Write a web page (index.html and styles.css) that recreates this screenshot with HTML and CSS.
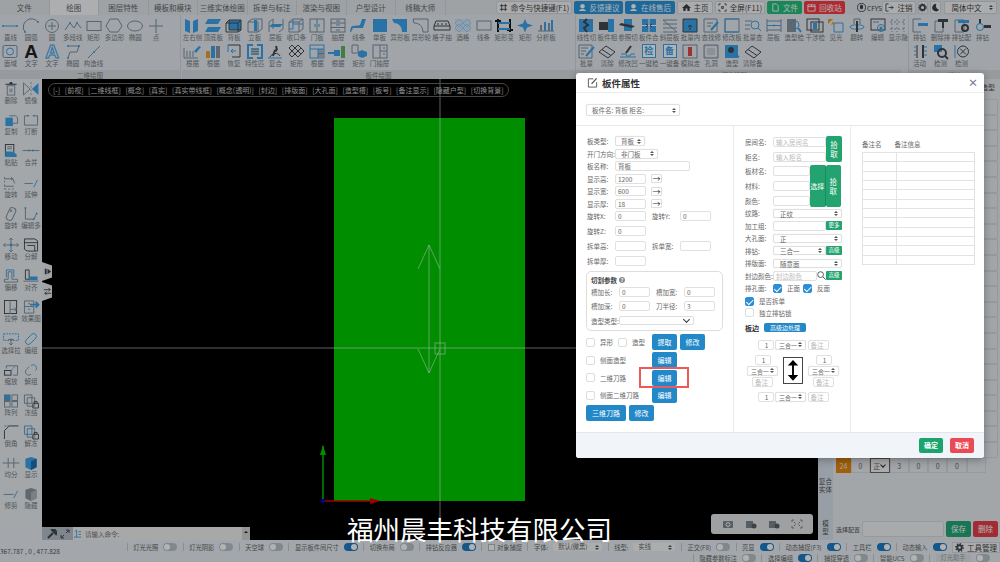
FILE: index.html
```html
<!DOCTYPE html>
<html lang="zh-CN">
<head>
  <meta charset="utf-8">
  <title>板件属性</title>
  <link rel="stylesheet" href="styles.css">
</head>
<body>
<div class="app">

  <!-- top tabs -->
  <div class="topbar">
    <div class="tabs">
      <div class="tab">文件</div>
      <div class="tab active">绘图</div>
      <div class="tab">图层特性</div>
      <div class="tab">模板和模块</div>
      <div class="tab">三维实体绘图</div>
      <div class="tab">拆单与标注</div>
      <div class="tab">渲染与视图</div>
      <div class="tab">户型设计</div>
      <div class="tab">线稿大师</div>
    </div>
    <div class="top-actions">
      <div class="tb w76"><svg class="ti" viewBox="0 0 10 10"><path class="k" d="M3 1v8M7 1v8M1 3h8M1 7h8"/></svg>命令与快捷键(F1)</div>
      <div class="tb blue w49"><svg class="ti" viewBox="0 0 10 10"><circle class="fw" cx="5" cy="3.5" r="2.5"/><path class="fw" d="M1 9c1-3 7-3 8 0z"/></svg>反馈建议</div>
      <div class="tb blue w50"><svg class="ti" viewBox="0 0 10 10"><circle class="fw" cx="5" cy="3.5" r="2.5"/><path class="fw" d="M1 9c1-3 7-3 8 0z"/></svg>在线售后</div>
      <div class="tb w36"><svg class="ti" viewBox="0 0 10 10"><path class="fk" d="M5 1 0 5.5h1.5V9h2.500V6h2v3h2.500V5.500H10z"/></svg>主页</div>
      <div class="tb w50"><svg class="ti" viewBox="0 0 10 10"><path class="k" d="M1 3V1h2M7 1h2v2M9 7v2H7M3 9H1V7M4 4h2v2H4z"/></svg>全屏(F11)</div>
      <div class="tb green w35"><svg class="ti" viewBox="0 0 10 10"><path class="w" d="M2 1h4l2 2v6H2z"/></svg>文件</div>
      <div class="tb red w41"><svg class="ti" viewBox="0 0 10 10"><path class="w" d="M1 2h8v7H1zM1 4h8M5 2v2"/></svg>回收站</div>
      <div class="user"><svg class="ti" viewBox="0 0 10 10"><circle class="k" cx="5" cy="5" r="4.500"/><ellipse class="fk" cx="5" cy="4.500" rx="1.800" ry="2.500"/></svg>CFYS</div>
      <div class="tb w34"><svg class="ti" viewBox="0 0 10 10"><path class="k" d="M4 1H1v8h3M4 5h5M7 3l2 2-2 2"/></svg>注销</div>
      <div class="tb w10 icon-only"><svg class="ti" viewBox="0 0 10 10"><circle class="k2" cx="5" cy="5" r="2.800"/><circle class="k" cx="5" cy="5" r="4.200" stroke-dasharray="1.500 1.500"/></svg></div>
      <div class="tb w11 icon-only"><svg class="ti" viewBox="0 0 10 10"><path class="fk" d="M6 1a4.200 4.200 0 1 0 3 6.500A4.500 4.500 0 0 1 6 1z"/></svg></div>
      <div class="tb lang sel">简体中文</div>
    </div>
  </div>

  <!-- ribbon -->
  <div class="ribbon">
    <div class="group g1">
      <div class="tools">
        <div class="tool"><svg viewBox="0 0 20 15"><path class="b" d="M3 8h14"/><circle class="fb" cx="3" cy="8" r="1"/><circle class="fb" cx="17" cy="8" r="1"/></svg><span>直线</span></div>
        <div class="tool"><svg viewBox="0 0 20 15"><path class="l" d="M4 14A8 8 0 0 1 17 4"/><circle class="fb" cx="4" cy="14" r="1"/><circle class="fb" cx="17" cy="4" r="1"/></svg><span>圆弧</span></div>
        <div class="tool"><svg viewBox="0 0 20 15"><circle class="l" cx="10" cy="8" r="6.500"/><path class="l" d="M10 4v8M6 8h8"/></svg><span>圆</span></div>
        <div class="tool"><svg viewBox="0 0 20 15"><path class="l" d="M2 12 7 5l4 5 3-5 4 5"/><circle class="fb" cx="7" cy="5" r="1"/><circle class="fb" cx="14" cy="5" r="1"/></svg><span>多段线</span></div>
        <div class="tool"><svg viewBox="0 0 20 15"><rect class="l" x="3" y="3.500" width="14" height="9"/></svg><span>矩形</span></div>
        <div class="tool"><svg viewBox="0 0 20 15"><path class="l" d="M6 1h8l4 7-4 6H6L2 8z"/></svg><span>多边形</span></div>
        <div class="tool"><svg viewBox="0 0 20 15"><ellipse class="l" cx="10" cy="8" rx="7.500" ry="5"/></svg><span>椭圆</span></div>
        <div class="tool"><svg viewBox="0 0 20 15"><path class="l" d="M10 1v14M3 8h14"/></svg><span>点</span></div>
        <div class="tool"><svg viewBox="0 0 20 15"><rect class="l" x="3" y="1.500" width="14" height="12" rx="1.500"/><circle class="b" cx="10" cy="7.500" r="3.500"/></svg><span>面域</span></div>
        <div class="tool"><svg viewBox="0 0 20 15"><text class="glyph" x="10" y="14">A</text></svg><span>文字</span></div>
        <div class="tool"><svg viewBox="0 0 20 15"><text class="glyph outline" x="10" y="14">A</text></svg><span>文字</span></div>
        <div class="tool"><svg viewBox="0 0 20 15"><path class="l" d="M5 2h11l-2 6H7L5 14"/><circle class="fb" cx="5" cy="2" r="1"/><circle class="fb" cx="16" cy="2" r="1"/><circle class="fb" cx="5" cy="14" r="1"/></svg><span>椭圆</span></div>
        <div class="tool"><svg viewBox="0 0 20 15"><path class="l" d="m4 14 12-12"/><circle class="fb" cx="10" cy="8" r="1"/></svg><span>构造线</span></div>
      </div>
      <div class="group-name">二维绘图</div>
    </div>

    <div class="group g2">
      <div class="tools">
        <div class="tool"><svg viewBox="0 0 20 15"><path class="fb" d="M3 1l5 2v12l-5-2zM11 3l5-2v12l-5 2z"/></svg><span>左右侧</span></div>
        <div class="tool"><svg viewBox="0 0 20 15"><path class="fb" d="M5 1h13l-3 5H2zM5 9h13l-3 5H2z"/></svg><span>顶底板</span></div>
        <div class="tool"><svg viewBox="0 0 20 15"><path class="fb" d="M5 2h12v10H5z"/><path class="k" d="M5 2h12v10H5zM2 5h12v9H2zM2 5l3-3M14 5l3-3M14 14l3-2"/></svg><span>背板</span></div>
        <div class="tool"><svg viewBox="0 0 20 15"><path class="l" d="M3 4h10v10H3zM3 4l4-3h10v10l-4 3"/><path class="fb" d="M9 2h3v11H9z"/></svg><span>立板</span></div>
        <div class="tool"><svg viewBox="0 0 20 15"><path class="l" d="M3 4v10M17 1v10M3 4l4-3M13 14l4-3M7 1v10"/><path class="fb" d="M6 6h11l-3 3H3z"/></svg><span>层板</span></div>
        <div class="tool"><svg viewBox="0 0 20 15"><path class="l" d="M3 4h10v10H3zM3 4l4-3h10v10l-4 3M13 4l4-3"/><path class="b" d="M7 1v10H3M17 6H7"/></svg><span>收口条</span></div>
        <div class="tool"><svg viewBox="0 0 20 15"><rect class="l" x="3" y="1" width="14" height="13"/><path class="l" d="M10 1v13"/><path class="b" d="M8 6v3M12 6v3"/></svg><span>门板</span></div>
        <div class="tool"><svg viewBox="0 0 20 15"><rect class="l" x="3" y="1" width="14" height="13"/><path class="l" d="M3 5h14M3 9.500h14M8 3h4M8 7h4M8 12h4"/></svg><span>抽屉</span></div>
        <div class="tool"><svg viewBox="0 0 20 15"><path class="fb" d="M13 1h4l-3 9H4L2 14H1l1-5c2-2 7-1 9-2z"/></svg><span>线条</span></div>
        <div class="tool"><svg viewBox="0 0 20 15"><rect class="fb" x="3" y="1" width="14" height="13"/></svg><span>单板</span></div>
        <div class="tool"><svg viewBox="0 0 20 15"><path class="fb" d="M2 1h15v13h-5C12 8 8 5 4 5z"/></svg><span>异形板</span></div>
        <div class="tool"><svg viewBox="0 0 20 15"><path class="l" d="M2 1h15v13h-5C12 8 8 5 3 5z"/></svg><span>异形轮</span></div>
        <div class="tool"><svg viewBox="0 0 20 15"><path class="k" d="M2 8 4 3h12l2 5v4H2zM2 8h16"/><path class="k" d="M6 5v2M10 5v2M14 5v2"/></svg><span>格子抽</span></div>
        <div class="tool"><svg viewBox="0 0 20 15"><rect class="flb" x="2" y="1" width="16" height="13"/><path class="bt" d="M2 5 6 1l4 4 4-4 4 4M2 10l4-4 4 4 4-4 4 4M2 5l4 4 4-4 4 4 4-4M2 10l4 4 4-4 4 4 4-4"/></svg><span>酒格</span></div>
        <div class="tool"><svg viewBox="0 0 20 15"><rect class="l" x="3" y="3" width="14" height="9"/></svg><span>线条</span></div>
        <div class="tool"><svg viewBox="0 0 20 15"><path class="kb" d="M4 1v13M16 1v13M1 3h6M13 12h6"/><path class="b2" d="M4 5h12M4 11h12"/></svg><span>矩形变</span></div>
        <div class="tool"><svg viewBox="0 0 20 15"><path class="fb" d="M10 1l2 4.500 6 2-6 2-2 5-2-5-6-2 6-2z"/></svg><span>矩形</span></div>
        <div class="tool"><svg viewBox="0 0 20 15"><path class="l" d="M2 13h16"/><path class="fg" d="M4 7h2v6H4zM12 5h2v8h-2z"/><path class="fb" d="M8 4h2v9H8zM15 2h2v11h-2z"/></svg><span>分析板</span></div>
        <div class="tool"><svg viewBox="0 0 20 15"><path class="l" d="M2 4v10h14"/><path class="l" d="M5 7v6M8 7v6M11 7v6"/><path class="fb" d="m12 7 5-5 2 1-5 6z"/></svg><span>根据</span></div>
        <div class="tool"><svg viewBox="0 0 20 15"><path class="for" d="M3 7h4v7H3z"/><path class="fy" d="M8 2h4v12H8z"/><path class="fg" d="M13 2h4v12h-4z"/></svg><span>根据</span></div>
        <div class="tool"><svg viewBox="0 0 20 15"><path class="k" d="M4 1h12v12H8"/><path class="b" d="M12 7H7M9 5 7 7l2 2M4 1v7"/></svg><span>恢复</span></div>
        <div class="tool"><svg viewBox="0 0 20 15"><path class="b2" d="M8 1H3v13h5M12 1h5v13h-5M6 7.500h8"/><path class="k" d="M6 5h8M6 10h8"/></svg><span>特性匹</span></div>
        <div class="tool"><svg viewBox="0 0 20 15"><path class="k2" d="m7 12 2-6M9 6l2 1M10 2l1 4"/><path class="k" d="M4 13c2-4 8-5 10-1"/><path class="b" d="M2 14h14"/></svg><span>复合</span></div>
        <div class="tool"><svg viewBox="0 0 20 15"><path class="k" d="m3 4 3-3 3 3-3 3zM9 4l3-3 3 3-3 3zM15 4l3 3-3 3-3-3zM6 7l3 3-3 3-3-3zM9 10l3-3 3 3-3 3z"/></svg><span>矩形</span></div>
        <div class="tool"><svg viewBox="0 0 20 15"><rect class="b" x="3" y="1" width="14" height="13"/><path class="fg2" d="M11 5h6v9h-6z"/><path class="b" d="M3 5h14M11 5v9M11 9.500h6"/></svg><span>根据</span></div>
        <div class="tool"><svg viewBox="0 0 20 15"><path class="b2" d="M0 9h8"/><path class="fb" d="M6 6h6v6H6z"/><path class="fgr" d="M13 2h4v12h-4z"/></svg><span>根据</span></div>
        <div class="tool"><svg viewBox="0 0 20 15"><path class="l" d="M3 1h6v7h3"/><path class="l" d="M3 1v8h6"/><path class="fb" d="m13 6 5 2v4l-5 2-4-2V8z"/></svg><span>矩形</span></div>
        <div class="tool"><svg viewBox="0 0 20 15"><rect class="l" x="3" y="1" width="14" height="13"/><path class="l" d="M10 1v13M10 7h7M13 4h2M13 10h2"/></svg><span>门抽屉</span></div>
      </div>
      <div class="group-name">板件绘图</div>
    </div>

    <div class="group g3">
      <div class="tools">
        <div class="tool"><svg viewBox="0 0 20 15"><rect class="fb" x="3" y="1" width="14" height="13"/><path class="k2" d="M11 1 8 4l4 3-4 3 3 4"/></svg><span>线性切</span></div>
        <div class="tool"><svg viewBox="0 0 20 15"><path class="fdk" d="M2 4h11v8H2z"/><path class="fb" d="M11 1h6v13h-6z"/></svg><span>板件相</span></div>
        <div class="tool"><svg viewBox="0 0 20 15"><path class="fb" d="M6 1h8v12H6z"/><path class="fdk" d="M3 5l14 3-3 2L1 7z"/></svg><span>参照切</span></div>
        <div class="tool"><svg viewBox="0 0 20 15"><rect class="fb" x="3" y="1" width="14" height="13"/><path class="wl" d="M3 7.500h14M10 1v13"/><path class="k" d="M7 6l2 1.500L7 9M13 6l-2 1.500 2 1.500"/></svg><span>板件合</span></div>
        <div class="tool"><svg viewBox="0 0 20 15"><path class="l" d="M3 2h14M3 6h14M3 10h14M3 14h14M3 2l14 12"/></svg><span>斜层板</span></div>
        <div class="tool"><svg viewBox="0 0 20 15"><rect class="fb" x="3" y="1" width="14" height="13"/><path class="k" d="M3 1h14v13H3zM10 12V7M8 9l2-2 2 2"/></svg><span>批量内</span></div>
        <div class="tool"><svg viewBox="0 0 20 15"><path class="l" d="M3 1h13v13H3zM6 5h6M6 8h4"/><path class="b2" d="m10 12 7-8"/></svg><span>查找修</span></div>
        <div class="tool"><svg viewBox="0 0 20 15"><rect class="l" x="3" y="1" width="14" height="13"/><path class="b" d="M3 1h14M3 14h14M3 1v13"/></svg><span>修改板</span></div>
        <div class="tool"><svg viewBox="0 0 20 15"><path class="l" d="M2 3h7M2 7h5M2 11h5"/><circle class="b" cx="12" cy="7" r="4"/><path class="b" d="m15 10 3 3"/></svg><span>批量查</span></div>
        <div class="tool"><svg viewBox="0 0 20 15"><path class="l" d="M3 1v13M17 1v13M3 3h14M3 12h14"/><path class="b" d="M3 7.500h14"/><circle class="fb" cx="10" cy="7.500" r="1"/></svg><span>层板</span></div>
        <div class="tool"><svg viewBox="0 0 20 15"><path class="fg" d="M3 1h9v13H3z"/><circle class="b" cx="11" cy="7" r="4"/><path class="b2" d="m14 10 3 4"/></svg><span>造型检</span></div>
        <div class="tool"><svg viewBox="0 0 20 15"><rect class="k" x="2" y="1" width="12" height="11"/><rect class="k" x="6" y="4" width="12" height="10"/><rect class="fb" x="8" y="5" width="4" height="6"/></svg><span>干涉检</span></div>
        <div class="tool"><svg viewBox="0 0 20 15"><path class="b" d="M8 5h9v9H8z"/><path class="for" d="M2 1h5L2 6z"/><path class="for" d="m7 3 1 3-3 1z"/></svg><span>见光</span></div>
        <div class="tool"><svg viewBox="0 0 20 15"><path class="l" d="M7 1h6M7 1v5M13 1v5"/><path class="b" d="M3 9c0-3 14-3 14 0s-14 3-14 0"/><path class="k2" d="M10 3v11"/></svg><span>翻转</span></div>
        <div class="tool"><svg viewBox="0 0 20 15"><rect class="k" x="3" y="1" width="14" height="11"/><path class="l" d="M5 4h6"/><circle class="b" cx="13" cy="10" r="3.500"/><circle class="fb" cx="13" cy="10" r="1.500"/></svg><span>编辑</span></div>
        <div class="tool"><svg viewBox="0 0 20 15"><path class="dash" d="M4 1v13M9 1v13M16 1v13M2 4h16M2 11h16"/></svg><span>显示隐</span></div>
        <div class="tool"><svg viewBox="0 0 20 15"><path class="l" d="M3 1h13v13H3z"/><path class="l" d="M5 4h7M5 7h5M5 10h3"/><path class="b2" d="m10 12 8-9"/></svg><span>批量</span></div>
        <div class="tool"><svg viewBox="0 0 20 15"><path class="k" d="m2 8 7-6 9 6-7 6zM5 5.500l9 6"/></svg><span>清除</span></div>
        <div class="tool"><svg viewBox="0 0 20 15"><path class="b" d="M2 13h16M3 10h5l1 2h3l1-2h4"/><path class="k2" d="m8 9 5-7"/></svg><span>修改凹</span></div>
        <div class="tool"><div class="check-tile">检</div><span>一键检</span></div>
        <div class="tool"><div class="check-tile">备</div><span>一键备</span></div>
        <div class="tool"><svg viewBox="0 0 20 15"><rect class="l" x="3" y="1" width="14" height="13"/><path class="fr" d="M8 3h4v9H8z"/></svg><span>模拟走</span></div>
        <div class="tool"><svg viewBox="0 0 20 15"><rect class="fg3" x="3" y="1" width="14" height="13"/><path class="l" d="M3 1h14v13H3z"/><path class="w" d="M5 3h10v9H5z"/></svg><span>孔洞</span></div>
        <div class="tool"><svg viewBox="0 0 20 15"><path class="fb" d="M3 1h13v13H3z"/><circle class="fdk" cx="9" cy="6" r="3"/><path class="b2" d="m11 9 6 4"/></svg><span>造型</span></div>
        <div class="tool"><svg viewBox="0 0 20 15"><path class="k" d="m2 8 7-6 9 6-7 6zM5 5.500l9 6"/></svg><span>清除备</span></div>
      </div>
      <div class="group-name">板件清除</div>
    </div>

    <div class="group g4">
      <div class="tools">
        <div class="tool"><svg viewBox="0 0 20 15"><path class="l" d="M3 1h8M3 1v13h8"/><path class="fb" d="M8 5h10v3H8z"/></svg><span>排钻</span></div>
        <div class="tool"><svg viewBox="0 0 20 15"><path class="l" d="M4 3h8v11H4z"/><path class="fdk" d="M7 1h10v3H7z"/><path class="k2" d="M12 4v6"/></svg><span>删除排</span></div>
        <div class="tool"><svg viewBox="0 0 20 15"><path class="l" d="M3 2h9v12H3z"/><path class="fb" d="M6 2h11v3H6z"/><circle class="k2" cx="13" cy="10" r="3"/></svg><span>排钻配</span></div>
        <div class="tool"><svg viewBox="0 0 20 15"><path class="fdk" d="M6 1h2v5H6zM11 7h7v3h-7z"/><circle class="b" cx="7" cy="9" r="3.500"/></svg><span>排钻</span></div>
        <div class="tool"><svg viewBox="0 0 20 15"><path class="fg" d="M6 1h2v13H6z"/><path class="fdk" d="M12 1h2v13h-2z"/><path class="b" d="M4 3h2M4 7h2M4 11h2M14 3h3M14 7h3M14 11h3"/></svg><span>活动</span></div>
        <div class="tool"><svg viewBox="0 0 20 15"><path class="fb" d="M3 1h8v7H3z"/><circle class="k2" cx="11" cy="9" r="4"/><path class="k2" d="m14 12 3 3"/></svg><span>检测</span></div>
        <div class="tool"><svg viewBox="0 0 20 15"><path class="b" d="M3 1v13"/><circle class="k" cx="11" cy="7.500" r="5.500"/><path class="k" d="m8 4.500 6 6M14 4.500l-6 6"/></svg><span>检测</span></div>
      </div>
      <div class="group-name">排钻</div>
    </div>
  </div>

  <!-- main row: left tools, canvas, right panel -->
  <div class="main">
    <div class="sidebar">
      <div class="tool"><svg viewBox="0 0 20 15"><path class="fdk" d="M9 0h2l1 2h4v1H4V2h4z"/><rect class="l" x="6" y="4" width="8" height="10"/><path class="l" d="M9 7v4M11 7v4"/></svg><span>删除</span></div>
      <div class="tool"><svg viewBox="0 0 20 15"><path class="fb" d="M18 1 11 7.500l7 6.500z"/><path class="l" d="M2 1l7 6.500L2 14z"/><path class="dash" d="M10 0v15"/></svg><span>镜像</span></div>
      <div class="tool"><svg viewBox="0 0 20 15"><path class="l" d="M8 3h7l2 2v6H8"/><path class="fb" d="M4 5h8v9H4z"/></svg><span>复制</span></div>
      <div class="tool"><svg viewBox="0 0 20 15"><path class="l" d="M8 3H3v10h14V3h-5"/><path class="b" d="M6 3h2M12 3h2"/></svg><span>打断</span></div>
      <div class="tool"><svg viewBox="0 0 20 15"><rect class="k" x="4" y="0.500" width="9" height="12"/><path class="l" d="M6 3h5M6 5h5"/><path class="fb" d="M4 14V8h7l5 3v3z"/></svg><span>粘贴</span></div>
      <div class="tool"><svg viewBox="0 0 20 15"><path class="l" d="M1 7h18"/><circle class="fb" cx="8" cy="7" r="1"/><circle class="fb" cx="12" cy="7" r="1"/></svg><span>合并</span></div>
      <div class="tool"><svg viewBox="0 0 20 15"><path class="dash" d="M3 1v13M3 14h12"/><path class="l" d="M3 3h9l2 5M10 4l2-1-2-2M3 11h10"/></svg><span>旋转</span></div>
      <div class="tool"><svg viewBox="0 0 20 15"><path class="l" d="M3 8h7"/><path class="dash" d="M10 8h4"/><path class="b" d="m13 12 4-8"/></svg><span>延伸</span></div>
      <div class="tool"><svg viewBox="0 0 20 15"><rect class="l" x="6.500" y="0.500" width="7" height="14" rx="3" transform="rotate(25 10 7.500)"/><circle class="l" cx="10" cy="4" r="1"/></svg><span>旋转</span></div>
      <div class="tool"><svg viewBox="0 0 20 15"><path class="l" d="M4 1v12h9l3-6"/><circle class="fb" cx="4" cy="1" r="1"/><circle class="fb" cx="13" cy="13" r="1"/><circle class="fb" cx="16" cy="7" r="1"/></svg><span>编辑多</span></div>
      <div class="tool"><svg viewBox="0 0 20 15"><path class="l" d="M10 0v15M2 7.500h16M8 2l2-2 2 2M8 13l2 2 2-2M4 5.500l-2 2 2 2M16 5.500l2 2-2 2"/><circle class="fb" cx="10" cy="7.500" r="1.500"/></svg><span>移动</span></div>
      <div class="tool"><svg viewBox="0 0 20 15"><path class="k" d="M3 1h11l3 2v11H6l-3-2zM3 5h14M6 8h8v6"/></svg><span>分解</span></div>
      <div class="tool"><svg viewBox="0 0 20 15"><path class="l" d="M3 11h4V3h4v8h6v3H3z"/><path class="b" d="M5 9h0V1h8v8"/></svg><span>偏移</span></div>
      <div class="tool"><svg viewBox="0 0 20 15"><path class="k" d="M4 1h4v10H4z"/><path class="fb" d="M8 8h9v4H8z"/><path class="l" d="M2 13h16"/></svg><span>对齐</span></div>
      <div class="tool"><svg viewBox="0 0 20 15"><rect class="k" x="3" y="0.500" width="13" height="14"/><path class="l" d="M9 0v15M9 10h7M14 8l2 2-2 2"/></svg><span>拉伸</span></div>
      <div class="tool"><svg viewBox="0 0 20 15"><path class="l" d="M3 1h10v13H3zM3 7h10M7 4h2M7 10h2"/><path class="b2" d="M9 5h9M15 2l3 3-3 3"/></svg><span>效果图</span></div>
      <div class="tool"><svg viewBox="0 0 20 15"><path class="dashb" d="M2 2h16v7H2z"/><path class="l" d="M10 14V7M8 12l2 2 2-2M7 8h6"/></svg><span>选择拉</span></div>
      <div class="tool"><svg viewBox="0 0 20 15"><rect class="b" x="3" y="4.500" width="14" height="6" rx="3" transform="rotate(-45 10 7.500)"/></svg><span>编组</span></div>
      <div class="tool"><svg viewBox="0 0 20 15"><rect class="k" x="3" y="8" width="7" height="5"/><path class="l" d="M5 6V3h12v10h-5"/><path class="dashb" d="M10 8l5-5"/></svg><span>缩放</span></div>
      <div class="tool"><svg viewBox="0 0 20 15"><path class="b" d="M10 3c3-3 8 1 5 5"/><path class="l" d="M10 12c-3 3-8-1-5-5l3-3"/></svg><span>解组</span></div>
      <div class="tool"><svg viewBox="0 0 20 15"><rect class="fb" x="3" y="1" width="6" height="6"/><rect class="l" x="3" y="1" width="6" height="6"/><rect class="l" x="11" y="1" width="6" height="6"/><rect class="l" x="3" y="8" width="6" height="6"/><rect class="l" x="11" y="8" width="6" height="6"/></svg><span>阵列</span></div>
      <div class="tool"><svg viewBox="0 0 20 15"><path class="l" d="M3 1h8v9H3zM6 4h8v9H6z"/><path class="k" d="M12 10h6v5h-6zM13.500 10V8h3v2"/></svg><span>冻结</span></div>
      <div class="tool"><svg viewBox="0 0 20 15"><path class="k" d="M3 15V6l5-5h10"/><path class="dashb" d="M3 1h5"/></svg><span>倒角</span></div>
      <div class="tool"><svg viewBox="0 0 20 15"><path class="b" d="M3 1h8v9H3z"/><path class="l" d="M6 4h8v9H6z"/><path class="k" d="M12 10h6v5h-6zM13.500 10V8h3v2"/></svg><span>解冻</span></div>
      <div class="tool"><svg viewBox="0 0 20 15"><path class="l" d="M1 7.500h18M7 2v11M13 2v11"/></svg><span>均分</span></div>
      <div class="tool"><svg viewBox="0 0 20 15"><path class="fb" d="M4 3l6-2 6 2v9l-6 3-6-3z"/><path class="fdb" d="M10 6l6-3v9l-6 3z"/></svg><span>显示</span></div>
      <div class="tool"><svg viewBox="0 0 20 15"><path class="l" d="M2 8h9"/><path class="dash" d="M11 8h3"/><path class="b" d="m13 12 4-8"/></svg><span>修剪</span></div>
      <div class="tool"><svg viewBox="0 0 20 15"><path class="fg" d="M4 3l6-2 6 2v9l-6 3-6-3z"/><path class="fg2" d="M10 6l6-3v9l-6 3z"/></svg><span>隐藏</span></div>
    </div>

    <div class="canvas">
      <div class="panel-green"></div>
      <svg class="overlay-lines" viewBox="0 0 776 461">
        <path class="cross" d="M398 0v438M0 269h776"/>
        <rect class="cross" x="393" y="264" width="10" height="11"/>
        <path class="cross" d="M376 190 387 166l11 24M376 270l11 24 11-24M387 166v128"/>
        <path class="ax-g" d="M281 422v-55"/>
        <path class="ax-gh" d="m278 376 3-10 3 10z"/>
        <path class="ax-r" d="M281 422h55"/>
        <path class="ax-rh" d="m328 419 10 3-10 3z"/>
        <circle class="ax-b" cx="281" cy="422" r="2"/>
      </svg>
      <div class="view-bar">
        <span>[-]</span><span>[前视]</span><span>[二维线框]</span><span>[概念]</span><span>[真实]</span><span>[真实带线框]</span><span>[概念(透明)]</span><span>[封边]</span><span>[排版面]</span><span>[大孔面]</span><span>[造型槽]</span><span>[板号]</span><span>[备注显示]</span><span>[隐藏户型]</span><span>[切换背景]</span>
      </div>
      <div class="side-tabs">
        <div class="side-tab"><svg viewBox="0 0 10 10"><path class="fk" d="M2 2h2v6H2zM5 2l4 3-4 3z"/></svg></div>
        <div class="side-tab"><svg viewBox="0 0 10 10"><path class="k" d="M1 3h7M6 1l2 2-2 2M9 7H2M4 5 2 7l2 2"/></svg></div>
      </div>
      <div class="cmd">
        <div class="cmd-tools">
          <svg viewBox="0 0 10 10"><path class="k2" d="m1 9 5-5M5 1a3 3 0 0 1 4 4z"/></svg>
          <svg viewBox="0 0 10 10"><path class="k" d="M1 9l3-3M6 4l3-3M1 6v3h3M6 1h3v3"/></svg>
        </div>
        <div class="cmd-input"><svg viewBox="0 0 10 10"><path class="b" d="M4 1v8M2 3l2-2M6 3h3M6 6h3M6 9h3M1 9h5"/></svg>请输入命令:</div>
        <div class="cmd-up"></div>
      </div>
      <div class="cam">
        <svg viewBox="0 0 12 10"><rect class="gf" x="1" y="2" width="10" height="7" rx="1"/><circle class="wl" cx="6" cy="5.500" r="2"/></svg>
        <svg viewBox="0 0 12 10"><path class="gf" d="M1 2h7v4h3v3H1z"/><circle class="gd" cx="9" cy="7" r="2.500"/></svg>
        <svg viewBox="0 0 12 10"><path class="gf" d="M1 2h7v4h3v3H1z"/><circle class="gd" cx="9" cy="7" r="2.500"/></svg>
        <svg viewBox="0 0 12 10"><path class="gl" d="M1 3V1h2M9 1h2v2M11 7v2H9M3 9H1V7M3 3l1.500 1.500M9 3 7.500 4.500M9 7 7.500 5.500M3 7l1.500-1.500"/></svg>
      </div>
    </div>

    <div class="right-panel">
      <div class="strip">
        <div class="strip-label">复合<br>实体</div>
        <div class="strip-label model">模 型</div>
      </div>
      <div class="right-body">
        <div class="rp-title">造型</div>
        <div class="rp-rows">
          <div class="rp-row"></div><div class="rp-row"></div><div class="rp-row"></div><div class="rp-row"></div>
          <div class="rp-row"></div><div class="rp-row"></div><div class="rp-row"></div><div class="rp-row"></div>
          <div class="rp-row"></div><div class="rp-row"></div><div class="rp-row"></div><div class="rp-row"></div>
          <div class="rp-row"></div><div class="rp-row"></div><div class="rp-row"></div><div class="rp-row"></div>
          <div class="rp-row"></div><div class="rp-row"></div><div class="rp-row"></div><div class="rp-row"></div>
          <div class="rp-row"></div><div class="rp-row"></div><div class="rp-row"></div>
          <div class="rp-row cells">
            <div class="cell orange">24</div><div class="cell">0</div><div class="cell zs">正</div><div class="cell">3</div><div class="cell">0</div><div class="cell">0</div><div class="cell">0</div><div class="cell"></div>
          </div>
        </div>
        <div class="config">
          <span>选择配置</span>
          <div class="config-sel"></div>
          <div class="cfg-btn save">保存</div>
          <div class="cfg-btn del">删除</div>
        </div>
      </div>
    </div>
  </div>

  <!-- status bar -->
  <div class="status">
    <div class="coords">367.787 , 0 , 477.828</div>
    <div class="status-rows">
      <div class="status-row">
        <div class="st">灯光光照<i class="tg"></i></div>
        <div class="st">灯光阴影<i class="tg"></i></div>
        <div class="st">天空球<i class="tg"></i></div>
        <div class="st">显示板件间尺寸<i class="tg on"></i></div>
        <div class="st">切换布局<i class="tg"></i></div>
        <div class="st">排钻反应器<i class="tg on"></i></div>
        <div class="st snap"><b class="mini-ck"></b>对象捕捉</div>
        <div class="st">字体:<div class="sel st-sel wide">默认(微黑)</div></div>
        <div class="st">线型:<div class="sel st-sel">实线</div></div>
        <div class="st">正交(F8)<i class="tg"></i></div>
        <div class="st">亮显<i class="tg on"></i></div>
        <div class="st">动态捕捉(F3)<i class="tg on"></i></div>
        <div class="st">工具栏<i class="tg on"></i></div>
        <div class="st">动态输入<i class="tg on"></i></div>
        <div class="tool-mgr"><svg viewBox="0 0 10 10"><circle class="k2" cx="5" cy="5" r="2.500"/><circle class="k2" cx="5" cy="5" r="4" stroke-dasharray="1.500 1.600"/></svg>工具管理</div>
      </div>
      <div class="status-row second">
        <div class="st">隐藏参数标注<i class="tg"></i></div>
        <div class="st">选择编组<i class="tg on"></i></div>
        <div class="st">捕捉穿透<i class="tg"></i></div>
        <div class="st">智能UCS<i class="tg"></i></div>
        <div class="st off-st"><span class="dim-btn">灯光助手</span><i class="tg"></i></div>
      </div>
    </div>
  </div>

  <div class="backdrop"></div>

  <!-- modal -->
  <div class="modal">
    <div class="modal-head">
      <svg class="edit-ic" viewBox="0 0 12 12"><path class="e1" d="M7 2H1.500v9h9V5.500"/><path class="e2" d="m5 7.500 5.500-6"/></svg>
      <h3>板件属性</h3>
      <div class="modal-x">×</div>
    </div>
    <div class="modal-sub">
      <div class="sel fld board-sel">板件名: 背板 柜名:</div>
    </div>
    <div class="modal-body">

      <div class="col col-a">
        <div class="fr"><label>板类型:</label><div class="sel fld w30">背板</div></div>
        <div class="fr"><label>开门方向:</label><div class="sel fld w43">非门板</div></div>
        <div class="fr"><label>板名称:</label><input class="w75" value="背板"></div>
        <div class="fr"><label>显示高:</label><input value="1200"><div class="arrow-btn">→</div></div>
        <div class="fr"><label>显示宽:</label><input value="600"><div class="arrow-btn">→</div></div>
        <div class="fr"><label>显示厚:</label><input value="18"><div class="arrow-btn">→</div></div>
        <div class="fr"><label>旋转X:</label><input value="0"><label class="second">旋转Y:</label><input value="0"></div>
        <div class="fr gap2"><label>旋转Z:</label><input value="0"></div>
        <div class="fr gap2"><label>拆单高:</label><input><label class="second">拆单宽:</label><input></div>
        <div class="fr gap2"><label>拆单厚:</label><input></div>

        <div class="cut-box">
          <div class="cut-title">切割参数 <i class="help">?</i></div>
          <div class="fr"><label>槽加长:</label><input value="0"><label class="second">槽加宽:</label><input value="0"></div>
          <div class="fr"><label>槽加深:</label><input value="0"><label class="second">刀半径:</label><input value="3"></div>
          <div class="fr"><label>造型类型:</label><div class="chev-sel"></div></div>
        </div>

        <div class="crow">
          <div class="ck-group"><b class="ck"></b>异形<b class="ck"></b>造型</div>
          <div class="btn">提取</div><div class="btn">修改</div>
        </div>
        <div class="crow">
          <div class="ck-group"><b class="ck"></b>侧面造型</div>
          <div class="btn">编辑</div>
        </div>
        <div class="crow">
          <div class="ck-group"><b class="ck"></b>二维刀路</div>
          <div class="btn marked">编辑</div>
        </div>
        <div class="crow">
          <div class="ck-group"><b class="ck"></b>侧面二维刀路</div>
          <div class="btn">编辑</div>
        </div>
        <div class="three-d">
          <div class="btn wide-btn">三维刀路</div><div class="btn">修改</div>
        </div>
      </div>

      <div class="col col-b">
        <div class="pick">
          <div class="pick-rows">
            <div class="mr"><label>房间名:</label><input class="w53 ph" placeholder="输入房间名"></div>
            <div class="mr"><label>柜名:</label><input class="w53 ph" placeholder="输入柜名"></div>
          </div>
          <div class="gbtn tall">拾<br>取</div>
        </div>
        <div class="pick second-pick">
          <div class="pick-rows">
            <div class="mr"><label>板材名:</label><input class="w37"></div>
            <div class="mr"><label>材料:</label><input class="w37"></div>
            <div class="mr"><label>颜色:</label><input class="w37"></div>
          </div>
          <div class="gbtn narrow">选择</div>
          <div class="gbtn">拾<br>取</div>
        </div>
        <div class="mr line"><label>纹路:</label><div class="sel fld w69 in">正纹</div></div>
        <div class="mr line"><label>加工组:</label><input class="w53"><div class="gmini">更多</div></div>
        <div class="mr line"><label>大孔面:</label><div class="sel fld w69 in">正</div></div>
        <div class="mr line"><label>排钻:</label><div class="sel fld w53 in">三合一</div><div class="gmini">高级</div></div>
        <div class="mr line"><label>排版面:</label><div class="sel fld w69 in">随意面</div></div>
        <div class="mr line"><label>封边颜色:</label>
          <input class="w44 ph" placeholder="封边颜色"><svg class="search" viewBox="0 0 10 10"><circle class="k" cx="4" cy="4" r="3.200"/><path class="k" d="m6.500 6.500 3 3"/></svg><div class="gmini">高级</div>
        </div>
        <div class="mr line"><label>排孔面:</label><b class="ck on"></b><span class="after-ck">正面</span><b class="ck on"></b><span class="after-ck">反面</span></div>
        <div class="plain cut-first"><b class="ck on"></b>是否拆单</div>
        <div class="plain"><b class="ck"></b>独立排钻锁</div>
        <div class="edge-title"><strong>板边</strong><div class="btn adv">高级边处理</div></div>
        <div class="edge">
          <div class="edge-row">
            <input class="e-num" value="1"><div class="sel fld e-sel">三合一</div><input class="e-note" placeholder="备注">
          </div>
          <div class="edge-mid">
            <div class="edge-stack">
              <input class="e-num" value="1"><div class="sel fld e-sel">三合一</div><input class="e-note" placeholder="备注">
            </div>
            <div class="grain"><svg viewBox="0 0 19 26"><path class="gr" d="M9.500 5v16"/><path class="grf" d="M9.500 2 15 8H4zM9.500 24 15 18H4z"/></svg></div>
            <div class="edge-stack">
              <input class="e-num" value="1"><div class="sel fld e-sel">三合一</div><input class="e-note" placeholder="备注">
            </div>
          </div>
          <div class="edge-row">
            <input class="e-num" value="1"><div class="sel fld e-sel">三合一</div><input class="e-note" placeholder="备注">
          </div>
        </div>
      </div>

      <div class="col col-c">
        <div class="note-head"><span>备注名</span><span>备注信息</span></div>
        <table class="notes">
          <tr><td></td><td></td></tr>
          <tr><td></td><td></td></tr>
          <tr><td></td><td></td></tr>
          <tr><td></td><td></td></tr>
          <tr><td></td><td></td></tr>
          <tr><td></td><td></td></tr>
          <tr><td></td><td></td></tr>
          <tr><td></td><td></td></tr>
          <tr><td></td><td></td></tr>
          <tr><td></td><td></td></tr>
          <tr><td></td><td></td></tr>
          <tr><td></td><td></td></tr>
        </table>
      </div>
    </div>
    <div class="modal-foot">
      <div class="foot-btn ok">确定</div>
      <div class="foot-btn no">取消</div>
    </div>
  </div>

  <div class="subtitle">福州晨丰科技有限公司</div>
</div>
</body>
</html>
```

FILE: styles.css
```css
* {
  box-sizing: border-box;
}

html, body {
  margin: 0;
  padding: 0;
  background: #000;
}

.app {
  position: relative;
  display: flex;
  flex-direction: column;
  width: 1000px;
  height: 562px;
  overflow: hidden;
  font-family: "Noto Sans CJK SC", "Liberation Sans", sans-serif;
  font-size: 7px;
  color: #555;
  background: #eaf0f5;
}

/* svg helpers */
svg { display: block; fill: none; }
.l { stroke: #7a90a3; stroke-width: 1; }
.b { stroke: #3aa4ec; stroke-width: 1; }
.b2 { stroke: #3aa4ec; stroke-width: 2; }
.bt { stroke: #8cc4ec; stroke-width: .7; }
.k { stroke: #434a51; stroke-width: 1; }
.k2 { stroke: #434a51; stroke-width: 2; }
.kb { stroke: #1a1a1a; stroke-width: 2; }
.w { stroke: #fff; stroke-width: 1; }
.wl { stroke: #fff; stroke-width: 1; }
.dash { stroke: #8599aa; stroke-width: 1; stroke-dasharray: 2 2; }
.dashb { stroke: #3aa4ec; stroke-width: 1; stroke-dasharray: 2 1; }
.fb { fill: #3aa4ec; }
.flb { fill: #cfe6f7; }
.fdb { fill: #1a6fb0; }
.fk { fill: #3a4046; }
.fw { fill: #fff; }
.fdk { fill: #434a51; }
.fg { fill: #8a949d; }
.fg2 { fill: #b0b8bf; }
.fg3 { fill: #c7d0d8; }
.fgr { fill: #63b25e; }
.for { fill: #f0a030; }
.fy { fill: #3aa4ec; }
.fr { fill: #e04848; }
.glyph {
  font-family: "Liberation Sans", sans-serif;
  font-size: 19px;
  font-weight: 700;
  fill: #222;
  text-anchor: middle;
}
.glyph.outline {
  fill: none;
  stroke: #3aa4ec;
  stroke-width: 1;
}

/* top bar */
.topbar {
  display: flex;
  justify-content: space-between;
  height: 15px;
  background: #e2e8ed;
}

.tabs {
  display: flex;
}

.tab {
  width: 49.5px;
  line-height: 15px;
  text-align: center;
  font-size: 7.5px;
  color: #666;
  border-right: 1px solid #d3d9de;
}

.tab.active {
  background: #f6fafc;
}

.top-actions {
  display: flex;
  gap: 2px;
  align-items: center;
  padding-right: 2px;
  width: 504px;
}

.tb {
  display: flex;
  align-items: center;
  justify-content: center;
  gap: 3px;
  height: 13px;
  font-size: 7.5px;
  white-space: nowrap;
  color: #444;
  background: #f5f7f9;
  border: 1px solid #d4d9dd;
  border-radius: 2px;
}

.ti {
  width: 9px;
  height: 9px;
  flex-shrink: 0;
}

.tb.blue { color: #fff; background: #2a95df; border-color: #2a95df; }
.tb.green { color: #fff; background: #24c07e; border-color: #24c07e; }
.tb.red { color: #fff; background: #fb3c46; border-color: #fb3c46; }

.w76 { width: 76px; }
.w49 { width: 49px; }
.w50 { width: 50px; }
.w36 { width: 36px; }
.w35 { width: 35px; }
.w41 { width: 41px; }
.w34 { width: 34px; }
.w10 { width: 10px; }
.w11 { width: 11px; }

.icon-only { padding: 0; }

.user {
  display: flex;
  align-items: center;
  gap: 1px;
  margin-left: 10px;
  margin-right: -2px;
  font-size: 6.500px;
  color: #444;
}

.tb.lang {
  width: 53px;
  margin-left: 1px;
  padding-right: 8px;
  background: #f5f7f9;
}

/* ribbon */
.ribbon {
  display: flex;
  height: 64px;
  background: #e7edf2;
}

.group {
  display: flex;
  flex-direction: column;
  border-right: 1px solid #d3d9de;
}

.g1 { width: 181px; }
.g2 { width: 395px; padding-left: 1px; }
.g3 { width: 333px; }
.g4 { width: 91px; border-right: none; }

.tools {
  display: grid;
  grid-auto-rows: 26px;
  flex: 1;
  padding-top: 3px;
}

.g1 .tools { grid-template-columns: repeat(8, 20.8px); }
.g2 .tools { grid-template-columns: repeat(18, 20.8px); }
.g3 .tools { grid-template-columns: repeat(16, 20.8px); }
.g4 .tools { grid-template-columns: repeat(4, 21px); }

.tool {
  display: flex;
  flex-direction: column;
  align-items: center;
  overflow: visible;
  white-space: nowrap;
  font-size: 6.500px;
  line-height: 9px;
  color: #767c82;
}

.tool svg {
  width: 20px;
  height: 15px;
  flex-shrink: 0;
  overflow: visible;
}

.check-tile {
  width: 14px;
  height: 14px;
  margin-bottom: 1px;
  font-size: 9px;
  font-weight: 700;
  line-height: 12px;
  text-align: center;
  color: #3aa4ec;
  background: #fff;
  border: 1px solid #3aa4ec;
}

.group-name {
  height: 11px;
  line-height: 11px;
  font-size: 6.500px;
  text-align: center;
  color: #777;
  background: #d8dee3;
}

.g3 .group-name { width: 325px; padding-right: 8px; }

/* main row */
.main {
  display: flex;
  height: 461px;
}

.sidebar {
  display: grid;
  grid-template-columns: 20px 20px;
  grid-auto-rows: 31.200px;
  justify-content: start;
  width: 42px;
  padding: 3px 0 0 1px;
  background: #eaeff3;
}

.sidebar .tool {
  line-height: 8px;
}

.sidebar .tool svg {
  height: 14px;
}

.canvas {
  position: relative;
  width: 776px;
  height: 461px;
  background: #000;
}

.panel-green {
  position: absolute;
  left: 292px;
  top: 39px;
  width: 191px;
  height: 383px;
  background: #00cc00;
}

.overlay-lines {
  position: absolute;
  left: 0;
  top: 0;
  width: 776px;
  height: 461px;
}

.cross { stroke: #fff; stroke-width: 1; opacity: .55; }
.ax-g { stroke: #00cc00; stroke-width: 1.500; }
.ax-gh { fill: #00cc00; }
.ax-r { stroke: #e00000; stroke-width: 1.500; }
.ax-rh { fill: #e00000; }
.ax-b { fill: #0000f0; }

.view-bar {
  position: absolute;
  left: 6px;
  top: 4px;
  display: flex;
  gap: 4.600px;
  align-items: center;
  height: 14px;
  padding: 0 4px;
  font-size: 7px;
  white-space: nowrap;
  color: #cfcfcf;
  border: 1px solid #666;
  border-radius: 7px;
}

.side-tabs {
  position: absolute;
  left: 0;
  top: 183px;
}

.side-tab {
  width: 10px;
  height: 19px;
  margin-bottom: 1px;
  padding: 5px 0 0 1px;
  background: #e8edf1;
  clip-path: polygon(0 0, 100% 18%, 100% 82%, 0 100%);
}

.side-tab svg {
  width: 9px;
  height: 9px;
}

.cmd {
  position: absolute;
  left: 0;
  bottom: 0;
  display: flex;
  width: 208px;
  height: 13px;
}

.cmd-tools {
  display: flex;
  gap: 3px;
  align-items: center;
  width: 31px;
  padding-left: 5px;
  background: #b6c0ca;
}

.cmd-tools svg {
  width: 10px;
  height: 10px;
}

.cmd-input {
  display: flex;
  flex: 1;
  gap: 3px;
  align-items: center;
  font-size: 6.500px;
  color: #777;
  background: #f1f1f1;
}

.cmd-input svg {
  width: 9px;
  height: 9px;
}

.cmd-up {
  position: relative;
  width: 8px;
  background: #d6d6d6;
}

.cmd-up::after {
  content: "";
  position: absolute;
  left: 1.500px;
  top: 4px;
  border: 2.500px solid transparent;
  border-top: none;
  border-bottom-color: #222;
}

.cam {
  position: absolute;
  left: 669px;
  top: 435px;
  display: flex;
  gap: 11px;
  align-items: center;
  justify-content: center;
  width: 102px;
  height: 20px;
  background: #e3e6e8;
  border-radius: 3px;
}

.cam svg {
  width: 12px;
  height: 10px;
}

.gf { fill: #7c868e; }
.gd { fill: #555d64; }
.gl { stroke: #7c868e; stroke-width: 1; }

/* right panel */
.right-panel {
  display: flex;
  width: 182px;
  background: #e9eef2;
}

.strip {
  position: relative;
  width: 15px;
  background: #d9e3ec;
}

.strip-label {
  position: absolute;
  left: 1px;
  top: 398px;
  width: 13px;
  font-size: 6.500px;
  line-height: 8px;
  text-align: center;
}

.strip-label.model {
  top: 440px;
}

.right-body {
  position: relative;
  flex: 1;
  padding: 3px 2px 0 3px;
}

.rp-title {
  height: 17px;
  padding-right: 3px;
  font-size: 7px;
  line-height: 11px;
  text-align: right;
}

.rp-row {
  height: 15.600px;
  border: 1px solid #d7dde2;
  border-radius: 1px;
}

.rp-row.cells {
  display: flex;
  width: 150px;
  border: none;
}

.cell {
  position: relative;
  width: 19.500px;
  height: 15.600px;
  font-size: 7px;
  line-height: 15px;
  text-align: center;
  color: #666;
  border: 1px solid #d7dde2;
}

.cell.orange {
  width: 15px;
  color: #eee;
  background: #e8880c;
  border-color: #e8880c;
}

.cell.zs {
  padding-right: 6px;
  border-color: #666;
  background: #f5f5f5;
}

.cell.zs::after {
  content: "";
  position: absolute;
  right: 4px;
  top: 4px;
  width: 3px;
  height: 3px;
  border: solid #222;
  border-width: 0 1px 1px 0;
  transform: rotate(45deg);
}

.config {
  position: absolute;
  left: 3px;
  top: 442px;
  display: flex;
  gap: 2px;
  align-items: center;
  width: 164px;
  font-size: 6px;
  white-space: nowrap;
}

.config-sel {
  flex-shrink: 0;
  width: 82px;
  height: 16px;
  background: #f1f4f6;
  border: 1px solid #d7dde2;
  border-radius: 2px;
}

.cfg-btn {
  flex-shrink: 0;
  width: 25px;
  height: 16px;
  font-size: 7.500px;
  line-height: 16px;
  text-align: center;
  color: #fff;
  border-radius: 2px;
}

.cfg-btn.save { background: #24a877; }
.cfg-btn.del { background: #e8404a; }

/* status */
.status {
  display: flex;
  justify-content: space-between;
  height: 22px;
  background: #eaf0f5;
}

.coords {
  width: 132px;
  font-size: 6.500px;
  line-height: 22px;
  white-space: nowrap;
  color: #555;
}

.status-rows {
  flex: 1;
}

.status-row {
  display: flex;
  justify-content: flex-end;
  align-items: center;
  height: 14px;
}

.status-row.second {
  height: 8px;
  padding-right: 5px;
}

.st {
  display: flex;
  gap: 5px;
  align-items: center;
  height: 8px;
  padding: 0 5.500px;
  font-size: 6.250px;
  white-space: nowrap;
  color: #666;
  border-left: 1px solid #c5ccd2;
}

.st.snap {
  gap: 2px;
}

.tg {
  position: relative;
  display: block;
  width: 14px;
  height: 8px;
  background: #b9c3cb;
  border-radius: 4px;
}

.tg::after {
  content: "";
  position: absolute;
  left: 1px;
  top: 1px;
  width: 6px;
  height: 6px;
  background: #fff;
  border-radius: 50%;
}

.tg.on {
  background: #1c7dc8;
}

.tg.on::after {
  left: 7px;
}

.mini-ck {
  width: 7px;
  height: 7px;
  background: #fff;
  border: 1px solid #bbb;
}

.sel {
  position: relative;
}

.sel::before,
.sel::after {
  content: "";
  position: absolute;
  right: 3px;
  border: 2px solid transparent;
}

.sel::before {
  bottom: 50%;
  margin-bottom: .5px;
  border-top: none;
  border-bottom: 2.500px solid #555;
}

.sel::after {
  top: 50%;
  margin-top: .5px;
  border-bottom: none;
  border-top: 2.500px solid #555;
}

.st-sel {
  width: 42px;
  height: 8px;
  line-height: 8px;
  padding-left: 5px;
  background: #f7f9fa;
  border-radius: 2px;
}

.st-sel.wide {
  width: 49px;
}

.tool-mgr {
  display: flex;
  gap: 3px;
  align-items: center;
  justify-content: center;
  width: 48px;
  height: 11px;
  font-size: 7.500px;
  color: #444;
  background: #f4f6f8;
  border: 1px solid #d5dadf;
}

.tool-mgr svg {
  width: 9px;
  height: 9px;
}

.dim-btn {
  width: 35px;
  height: 8px;
  line-height: 8px;
  text-align: center;
  color: #9aa2a8;
  background: #e2e7eb;
}

/* backdrop and modal */
.backdrop {
  position: absolute;
  inset: 0;
  background: rgba(0, 0, 0, .3);
}

.modal {
  position: absolute;
  left: 576px;
  top: 73px;
  display: flex;
  flex-direction: column;
  width: 408px;
  height: 385px;
  font-size: 6.500px;
  color: #666;
  background: #fff;
  border-radius: 3px;
  box-shadow: 0 2px 8px rgba(0, 0, 0, .3);
}

.modal-head {
  display: flex;
  gap: 4px;
  align-items: center;
  height: 20px;
  padding: 0 6px 0 11px;
  border-bottom: 1px solid #ececec;
}

.edit-ic {
  width: 11px;
  height: 11px;
}

.e1 { stroke: #555; stroke-width: 1; }
.e2 { stroke: #555; stroke-width: 1.500; }

.modal-head h3 {
  flex: 1;
  margin: 0;
  font-size: 9.500px;
  font-weight: 700;
  color: #333;
}

.modal-x {
  font-size: 10px;
  font-weight: 700;
  line-height: 10px;
  color: #778;
}

.modal-sub {
  height: 33px;
  padding: 11px 0 0 10px;
  border-bottom: 1px solid #e8e8e8;
}

.fld {
  height: 10px;
  padding-left: 5px;
  line-height: 9px;
  color: #666;
  background: #fff;
  border: 1px solid #e0e0e0;
  border-radius: 2px;
  box-shadow: 0 0 1px #ddd;
  white-space: nowrap;
}

.board-sel {
  width: 94px;
  height: 12px;
  line-height: 10px;
}

.modal-body {
  display: flex;
  flex: 1;
}

.col {
  padding-left: 11px;
}

.col-a {
  width: 157px;
  padding-top: 9px;
}

.col-b {
  width: 117px;
  padding-top: 10px;
  border-left: 1px solid #ececec;
}

.col-c {
  flex: 1;
  padding-top: 14px;
  border-left: 1px solid #ececec;
  border-top-left-radius: 3px;
}

.fr {
  display: flex;
  align-items: center;
  height: 12.500px;
}

.fr.gap2 {
  margin-top: 2.500px;
}

.fr label {
  width: 28px;
  white-space: nowrap;
}

.fr label.second {
  margin-left: 6px;
}

input {
  width: 31px;
  height: 10px;
  padding: 0 0 0 2px;
  font-family: inherit;
  font-size: 6.500px;
  color: #666;
  background: #fff;
  border: 1px solid #e0e0e0;
  border-radius: 2px;
  outline: none;
}

input::placeholder {
  color: #bbb;
}

input.w75 { width: 75px; }
input.w53, .sel.w53 { width: 53px; }
input.w37 { width: 37px; }
input.w44 { width: 44px; }

.w30 { width: 30px; }
.w43 { width: 43px; }
.w69 { width: 69px; }

.arrow-btn {
  width: 11px;
  height: 9px;
  margin-left: 5px;
  font-size: 8px;
  line-height: 8px;
  text-align: center;
  color: #333;
  border: 1px solid #ddd;
  border-radius: 1px;
}

.cut-box {
  width: 137px;
  height: 60px;
  margin: 3px 0 0 -1px;
  padding: 4px 4px 0;
  border: 1px solid #ddd;
  border-radius: 5px;
}

.cut-title {
  display: flex;
  gap: 2px;
  align-items: center;
  height: 9px;
  font-weight: 700;
  color: #444;
}

.help {
  width: 6px;
  height: 6px;
  font-size: 5px;
  font-style: normal;
  line-height: 6px;
  text-align: center;
  color: #fff;
  background: #888;
  border-radius: 50%;
}

.cut-box .fr {
  height: 14.500px;
}

.chev-sel {
  position: relative;
  width: 75px;
  height: 9px;
  border: 1px solid #ddd;
  border-radius: 2px;
}

.chev-sel::after {
  content: "";
  position: absolute;
  right: 4px;
  top: 0;
  width: 4px;
  height: 4px;
  border: solid #333;
  border-width: 0 1px 1px 0;
  transform: rotate(45deg);
}

.crow {
  display: flex;
  gap: 3px;
  align-items: center;
  height: 17.700px;
  margin-left: -1px;
}

.cut-box + .crow {
  margin-top: 3px;
}

.ck-group {
  display: flex;
  gap: 5px;
  align-items: center;
  width: 63px;
  white-space: nowrap;
}

.ck {
  display: block;
  flex-shrink: 0;
  width: 9px;
  height: 9px;
  background: #fff;
  border: 1px solid #ddd;
  border-radius: 2px;
}

.ck.on {
  position: relative;
  background: #2a8fd6;
  border-color: #2a8fd6;
}

.ck.on::after {
  content: "";
  position: absolute;
  left: 2px;
  top: 0;
  width: 3px;
  height: 5.500px;
  border: solid #fff;
  border-width: 0 1.500px 1.500px 0;
  transform: rotate(45deg);
}

.btn {
  width: 25px;
  height: 16px;
  font-size: 7px;
  line-height: 16px;
  text-align: center;
  color: #fff;
  background: #2288c8;
  border-radius: 2px;
  flex-shrink: 0;
}

.btn.marked {
  position: relative;
}

.btn.marked::after {
  content: "";
  position: absolute;
  inset: -3px -12px -2px -13px;
  border: 2px solid #ee5a5a;
}

.three-d {
  display: flex;
  gap: 3px;
  margin: 1px 0 0 -1px;
}

.wide-btn {
  width: 40px;
}

/* middle column */
.pick {
  display: flex;
  height: 27px;
}

.pick-rows {
  display: flex;
  flex-direction: column;
  justify-content: space-between;
  padding: 1px 0;
  width: 81px;
}

.second-pick {
  width: 96px;
  height: 42px;
  margin-top: 2px;
}

.second-pick .pick-rows {
  width: 65px;
}

.mr {
  display: flex;
  align-items: center;
  height: 10px;
  white-space: nowrap;
}

.mr.line {
  height: 12.500px;
}

.mr label {
  width: 28px;
}

.sel.in {
  height: 9px;
  line-height: 8px;
  text-align: left;
  padding-left: 6px;
}

.gbtn {
  display: flex;
  align-items: center;
  justify-content: center;
  width: 16px;
  font-size: 7.500px;
  line-height: 9px;
  text-align: center;
  color: #fff;
  background: #23a36f;
  border-radius: 2px;
}

.gbtn.tall {
  height: 26px;
}

.gbtn.narrow {
  font-size: 7px;
  border-right: 1px solid #1c8a5d;
}

.gmini {
  width: 16px;
  height: 9px;
  font-size: 5.500px;
  line-height: 9px;
  text-align: center;
  color: #fff;
  background: #23a36f;
  border-radius: 1px;
}

.search {
  width: 9px;
  height: 9px;
}

.after-ck {
  margin: 0 3px 0 5px;
}

.plain {
  display: flex;
  gap: 5px;
  align-items: center;
  height: 11.500px;
}

.plain.cut-first {
  margin-top: 1px;
}

.edge-title {
  display: flex;
  gap: 5px;
  align-items: center;
  height: 10px;
  margin-top: 4px;
}

.edge-title strong {
  font-size: 7px;
  color: #333;
}

.btn.adv {
  width: 42px;
  height: 9px;
  font-size: 6px;
  line-height: 9px;
}

.edge {
  display: flex;
  flex-direction: column;
  gap: 5px;
  width: 96px;
  margin-top: 7px;
}

.edge-row {
  display: flex;
  gap: 1.500px;
  align-items: center;
  justify-content: center;
  height: 10px;
}

.edge-mid {
  display: flex;
  gap: 5px;
  justify-content: center;
}

.edge-stack {
  display: flex;
  flex-direction: column;
  align-items: center;
  gap: 1px;
}

.e-num {
  width: 16px;
  text-align: center;
}

.e-note {
  width: 21px;
}

.e-sel {
  width: 31px;
  height: 10px;
  padding-left: 3px;
  font-size: 6px;
}

.grain {
  align-self: center;
  width: 20px;
  height: 27px;
  border: 1px solid #444;
}

.gr { stroke: #000; stroke-width: 2; }
.grf { fill: #000; }

/* notes column */
.note-head {
  display: flex;
  gap: 13px;
  height: 12px;
  line-height: 8px;
}

.notes {
  width: 113px;
  border-collapse: collapse;
  table-layout: fixed;
}

.notes td {
  height: 9.350px;
  padding: 0;
  border: 1px solid #e3e3e3;
}

.notes td:first-child {
  width: 34px;
}

.modal-foot {
  display: flex;
  gap: 7px;
  justify-content: flex-end;
  align-items: center;
  height: 26px;
  padding-right: 10px;
  background: #f1f4f8;
  border-top: 1px solid #e3e6ea;
  border-radius: 0 0 3px 3px;
}

.foot-btn {
  width: 24px;
  height: 15px;
  font-size: 7px;
  font-weight: 700;
  line-height: 15px;
  text-align: center;
  color: #fff;
  border-radius: 2px;
}

.foot-btn.ok { background: #1ba46f; }
.foot-btn.no { background: #ea4a55; }

.subtitle {
  position: absolute;
  left: 347px;
  top: 515px;
  font-size: 26.500px;
  line-height: 28px;
  white-space: nowrap;
  color: #fff;
}
```
